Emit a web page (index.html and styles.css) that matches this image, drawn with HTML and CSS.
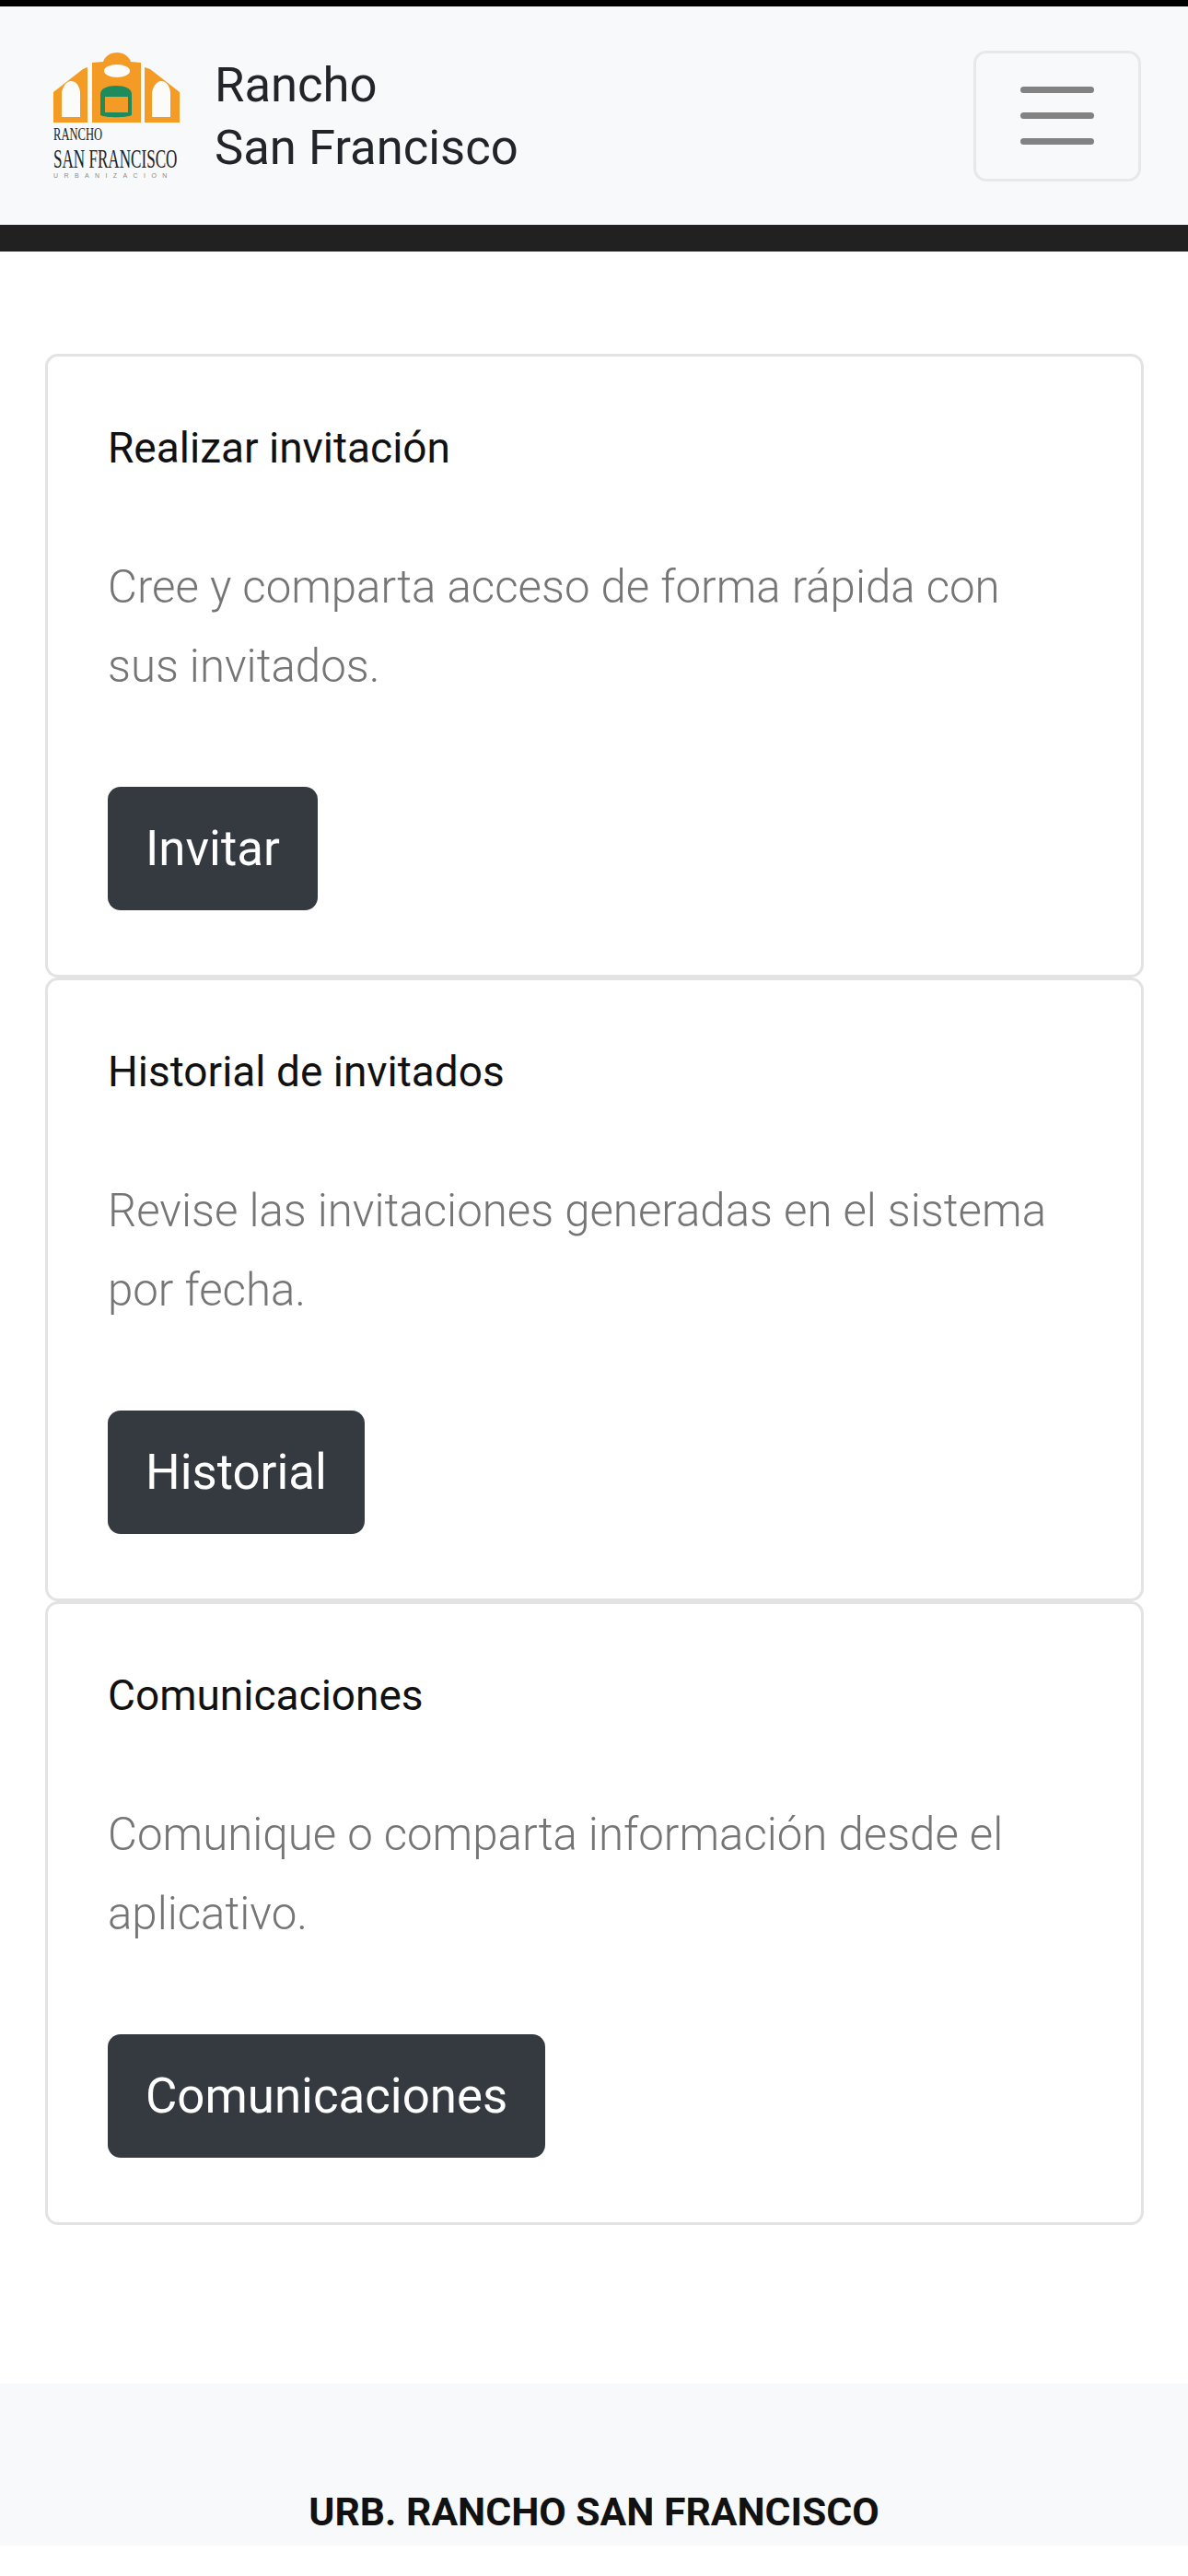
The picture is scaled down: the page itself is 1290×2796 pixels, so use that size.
FILE: index.html
```html
<!DOCTYPE html>
<html lang="es">
<head>
  <meta charset="UTF-8" />
  <meta name="viewport" content="width=device-width, initial-scale=1.0" />
  <title>Rancho San Francisco</title>
  <link rel="stylesheet" href="styles.css">
</head>
<body>
  <div class="status-strip"></div>

  <nav class="navbar">
    <a class="brand" href="#">
      <svg class="brand-logo" viewBox="0 0 137 137" role="img" aria-label="Rancho San Francisco Urbanización">
        <path class="logo-orange" d="M0 76V43L32 18L37 16V76Z"/>
        <path class="logo-orange" d="M42 76V11L54 10C56 4 62 0 69 0C76 0 82 4 84 10L95 11V76Z"/>
        <path class="logo-orange" d="M99 76V16L105 18L137 43V76Z"/>
        <ellipse class="logo-white" cx="69" cy="20" rx="14" ry="7"/>
        <path class="logo-white" d="M9 70V43C11 35 15 31 19 31C24 31 28 35 29 43V70Z"/>
        <path class="logo-white" d="M107 70V43C109 35 113 31 117 31C122 31 126 35 127 43V70Z"/>
        <path class="logo-green" d="M51 45C51 39 59 36 68 36C77 36 85 39 85 45V68C79 71 57 71 51 68Z"/>
        <rect class="logo-orange" x="56" y="48" width="25" height="17"/>
        <text class="logo-small" x="0" y="95" transform="scale(.7 1)">RANCHO</text>
        <text class="logo-big" x="0" y="125" transform="scale(.57 1)">SAN FRANCISCO</text>
        <text class="logo-tiny" x="0" y="136">URBANIZACION</text>
      </svg>
      <span class="brand-name">Rancho<br>San Francisco</span>
    </a>
    <button class="navbar-toggler" aria-label="Menu">
      <span class="toggler-bar"></span>
      <span class="toggler-bar"></span>
      <span class="toggler-bar"></span>
    </button>
  </nav>
  <div class="navbar-rule"></div>

  <main class="content">
    <section class="card">
      <h5 class="card-title">Realizar invitación</h5>
      <p class="card-text">Cree y comparta acceso de forma rápida con sus invitados.</p>
      <a class="btn" href="#">Invitar</a>
    </section>
    <section class="card">
      <h5 class="card-title">Historial de invitados</h5>
      <p class="card-text">Revise las invitaciones generadas en el sistema por fecha.</p>
      <a class="btn" href="#">Historial</a>
    </section>
    <section class="card">
      <h5 class="card-title">Comunicaciones</h5>
      <p class="card-text">Comunique o comparta información desde el aplicativo.</p>
      <a class="btn" href="#">Comunicaciones</a>
    </section>
  </main>

  <footer class="footer">
    <strong class="footer-name">URB. RANCHO SAN FRANCISCO</strong>
  </footer>
</body>
</html>
```

FILE: styles.css
```css
body {
  margin: 0;
  background-color: #fff;
  font-family: Roboto, "Liberation Sans", sans-serif;
}

.status-strip {
  height: 7px;
  background: #000;
}

.navbar {
  display: flex;
  align-items: center;
  justify-content: space-between;
  height: 237px;
  padding: 0 51px 0 58px;
  background: #f8f9fa;
}
.brand {
  display: flex;
  align-items: center;
  gap: 38px;
  color: #212529;
  text-decoration: none;
}
.brand-logo {
  width: 137px;
  height: 137px;
}
.brand-name {
  font-size: 52.6px;
  line-height: 68px;
}
.logo-orange { fill: #f39b25; }
.logo-white { fill: #fbfbf9; }
.logo-green { fill: #1f8a5c; }
.logo-small, .logo-big {
  font-family: "Liberation Serif", serif;
  fill: #222;
}
.logo-small { font-size: 18px; }
.logo-big { font-size: 30px; }
.logo-tiny {
  font-family: "Liberation Sans", sans-serif;
  font-size: 7px;
  letter-spacing: 6.4px;
  fill: #8a8a8a;
}

.navbar-toggler {
  display: flex;
  flex-direction: column;
  align-items: center;
  justify-content: center;
  gap: 21px;
  width: 182px;
  height: 142px;
  padding: 0;
  background: transparent;
  border: 3px solid #e7e8e9;
  border-radius: 14px;
}
.toggler-bar {
  width: 80px;
  height: 7px;
  border-radius: 4px;
  background: #828282;
}

.navbar-rule {
  height: 29px;
  background: #212121;
}

.content {
  padding: 111px 48px 0 49px;
}
.card {
  box-sizing: border-box;
  height: 677px;
  padding: 66px 70px 0 65px;
  border: 3px solid #e3e3e3;
  border-radius: 14px;
  background: #fff;
}
.card-title {
  margin: 0 0 75px;
  font-size: 46px;
  line-height: 66px;
  font-weight: 400;
  color: #111;
}
.card-text {
  margin: 0 0 88px;
  font-size: 49.2px;
  line-height: 86px;
  font-weight: 300;
  color: #757575;
}
.btn {
  display: inline-block;
  padding: 0 41px;
  line-height: 134px;
  font-size: 52.8px;
  color: #fff;
  background: #343a40;
  border-radius: 14px;
  text-decoration: none;
}

.footer {
  display: flex;
  justify-content: center;
  align-items: flex-end;
  box-sizing: border-box;
  height: 176px;
  margin-top: 172px;
  padding-bottom: 7px;
  background: #f8f9fa;
}
.footer-name {
  font-size: 42.7px;
  line-height: 60px;
  font-weight: 700;
  color: #111;
}
```
